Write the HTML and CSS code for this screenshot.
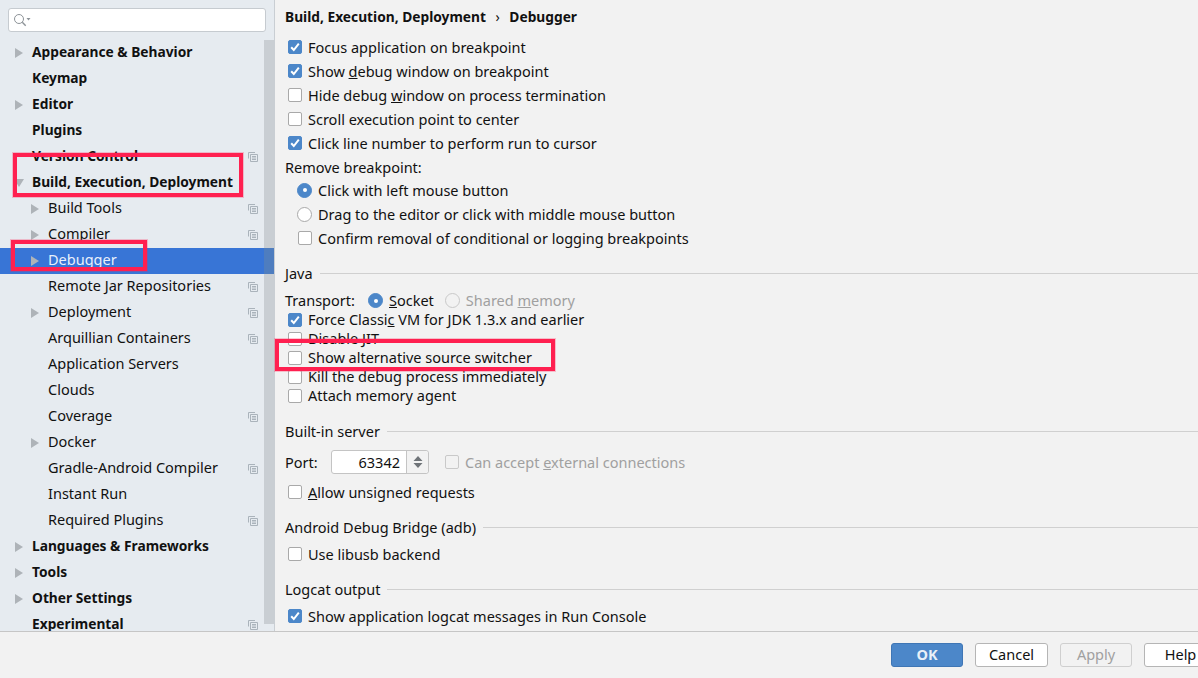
FILE: index.html
```html
<!DOCTYPE html>
<html lang="en">
<head>
<meta charset="utf-8">
<title>Settings - Debugger</title>
<link rel="stylesheet" href="styles.css">
</head>
<body>
<svg class="defs" width="0" height="0" aria-hidden="true">
  <symbol id="copy" viewBox="0 0 10 10"><path d="M.5 6.5V.5h6.5M2.5 9.5V2.5h7v7zM4 4.5h4M4 6h4M4 7.5h4" fill="none" stroke="#aab3bb"/></symbol>
  <symbol id="right" viewBox="0 0 8 10"><path d="M0 0l8 5-8 5z" fill="#aeb3b8"/></symbol>
  <symbol id="down" viewBox="0 0 10 8"><path d="M0 0h10L5 8z" fill="#aeb3b8"/></symbol>
  <symbol id="tick" viewBox="0 0 14 14"><path d="M3.2 7.2l2.6 2.8 5-6.4" fill="none" stroke="#fff" stroke-width="2"/></symbol>
</svg>
<div class="window">
  <div class="main">
    <aside class="sidebar">
      <div class="search">
        <svg class="search-icon" viewBox="0 0 18 14" width="18" height="14"><circle cx="6" cy="6" r="4.5" fill="none" stroke="#8d9398"/><path d="M9.3 9.3l3.4 3.4" stroke="#8d9398" stroke-width="1.4"/><path d="M13.5 5h4l-2 2.500z" fill="#8d9398"/></svg>
      </div>
      <div class="tree-wrap">
        <div class="scrollbar"></div>
        <ul class="tree">
          <li class="row top"><svg class="arrow"><use href="#right"/></svg><span>Appearance &amp; Behavior</span></li>
          <li class="row top"><span>Keymap</span></li>
          <li class="row top"><svg class="arrow"><use href="#right"/></svg><span>Editor</span></li>
          <li class="row top"><span>Plugins</span></li>
          <li class="row top"><span>Version Control</span><svg class="copy"><use href="#copy"/></svg></li>
          <li class="row top"><svg class="arrow down"><use href="#down"/></svg><span>Build, Execution, Deployment</span></li>
          <li class="row sub"><svg class="arrow"><use href="#right"/></svg><span>Build Tools</span><svg class="copy"><use href="#copy"/></svg></li>
          <li class="row sub"><svg class="arrow"><use href="#right"/></svg><span>Compiler</span><svg class="copy"><use href="#copy"/></svg></li>
          <li class="row sub selected"><svg class="arrow"><use href="#right"/></svg><span>Debugger</span></li>
          <li class="row sub"><span>Remote Jar Repositories</span><svg class="copy"><use href="#copy"/></svg></li>
          <li class="row sub"><svg class="arrow"><use href="#right"/></svg><span>Deployment</span><svg class="copy"><use href="#copy"/></svg></li>
          <li class="row sub"><span>Arquillian Containers</span><svg class="copy"><use href="#copy"/></svg></li>
          <li class="row sub"><span>Application Servers</span></li>
          <li class="row sub"><span>Clouds</span></li>
          <li class="row sub"><span>Coverage</span><svg class="copy"><use href="#copy"/></svg></li>
          <li class="row sub"><svg class="arrow"><use href="#right"/></svg><span>Docker</span></li>
          <li class="row sub"><span>Gradle-Android Compiler</span><svg class="copy"><use href="#copy"/></svg></li>
          <li class="row sub"><span>Instant Run</span></li>
          <li class="row sub"><span>Required Plugins</span><svg class="copy"><use href="#copy"/></svg></li>
          <li class="row top"><svg class="arrow"><use href="#right"/></svg><span>Languages &amp; Frameworks</span></li>
          <li class="row top"><svg class="arrow"><use href="#right"/></svg><span>Tools</span></li>
          <li class="row top"><svg class="arrow"><use href="#right"/></svg><span>Other Settings</span></li>
          <li class="row top"><span>Experimental</span><svg class="copy"><use href="#copy"/></svg></li>
        </ul>
      </div>
    </aside>
    <section class="content">
      <h1 class="crumb">Build, Execution, Deployment <span class="sep">›</span> Debugger</h1>

      <div class="group-top">
        <div class="opt r24"><i class="cb on"><svg><use href="#tick"/></svg></i>Focus application on breakpoint</div>
        <div class="opt r24"><i class="cb on"><svg><use href="#tick"/></svg></i><span>Show <u>d</u>ebug window on breakpoint</span></div>
        <div class="opt r24"><i class="cb"></i><span>Hide debug <u>w</u>indow on process termination</span></div>
        <div class="opt r24"><i class="cb"></i>Scroll execution point to center</div>
        <div class="opt r24"><i class="cb on"><svg><use href="#tick"/></svg></i>Click line number to perform run to cursor</div>
      </div>
      <div class="label remove">Remove breakpoint:</div>
      <div class="indent">
        <div class="opt r24"><i class="rb on"></i>Click with left mouse button</div>
        <div class="opt r24"><i class="rb"></i>Drag to the editor or click with middle mouse button</div>
        <div class="opt r24"><i class="cb"></i>Confirm removal of conditional or logging breakpoints</div>
      </div>

      <div class="title java">Java</div>
      <div class="transport">
        <span class="transport-label">Transport:</span>
        <i class="rb on"></i><span class="socket"><u>S</u>ocket</span>
        <i class="rb off"></i><span class="muted">Shared <u>m</u>emory</span>
      </div>
      <div class="tight">
        <div class="opt r19"><i class="cb on"><svg><use href="#tick"/></svg></i><span>Force Classi<u>c</u> VM for JDK 1.3.x and earlier</span></div>
        <div class="opt r19"><i class="cb"></i>Disable JIT</div>
        <div class="opt r19"><i class="cb"></i>Show alternative source switcher</div>
        <div class="opt r19"><i class="cb"></i>Kill the debug process immediately</div>
        <div class="opt r19"><i class="cb"></i>Attach memory agent</div>
      </div>

      <div class="title builtin">Built-in server</div>
      <div class="port-row">
        <span class="port-label">Port:</span>
        <div class="spinner">
          <span class="port-value">63342</span>
          <span class="spin"><svg viewBox="0 0 10 14" width="10" height="14"><path d="M5 1l4.500 5h-9zM5 13L.5 8h9z" fill="#6f7478"/></svg></span>
        </div>
        <i class="cb off"></i><span class="muted">Can accept <u>e</u>xternal connections</span>
      </div>
      <div class="opt r24 allow"><i class="cb"></i><span><u>A</u>llow unsigned requests</span></div>

      <div class="title adb">Android Debug Bridge (adb)</div>
      <div class="opt r24 libusb"><i class="cb"></i>Use libusb backend</div>

      <div class="title logcat">Logcat output</div>
      <div class="opt r24 show-log"><i class="cb on"><svg><use href="#tick"/></svg></i>Show application logcat messages in Run Console</div>
    </section>
  </div>
  <footer class="footer">
    <button class="btn primary" type="button">OK</button>
    <button class="btn" type="button">Cancel</button>
    <button class="btn disabled" type="button">Apply</button>
    <button class="btn" type="button">Help</button>
  </footer>
  <div class="mark mark-build"></div>
  <div class="mark mark-debugger"></div>
  <div class="mark mark-switcher"></div>
</div>
</body>
</html>
```
FILE: styles.css
```css
* { box-sizing: border-box; }
html, body { margin: 0; height: 100%; overflow: hidden; }
body { font: 14.5px/19px "Noto Sans", "Open Sans", sans-serif; color: #111; background: #f2f2f2; }
.defs { position: absolute; }
.window { position: relative; width: 1198px; height: 678px; display: flex; flex-direction: column; overflow: hidden; }
.main { height: 631px; display: flex; flex: none; }

.sidebar { width: 275px; flex: none; background: #e6ebf0; border-right: 1px solid #c9ced3; display: flex; flex-direction: column; overflow: hidden; }
.search { margin: 8px 8px 0; width: 258px; height: 24px; background: #fff; border: 1px solid #c6cbd0; border-radius: 3px; display: flex; align-items: center; padding-left: 4px; flex: none; }
.tree-wrap { position: relative; flex: 1; margin-top: 8px; overflow: hidden; }
.scrollbar { position: absolute; right: 0; top: 0; width: 10px; height: 584px; background: #c9ced3; }
.tree { list-style: none; margin: 0; padding: 0; position: relative; }
.row { height: 26px; display: flex; align-items: center; position: relative; padding-bottom: 4px; white-space: nowrap; }
.top { padding-left: 32px; font-weight: 700; font-size: 13.75px; }
.sub { padding-left: 48px; }
.selected { background: #3875d6; color: #e8f0fb; }
.selected::after { content: ""; position: absolute; right: 0; top: 0; width: 10px; height: 100%; background: #4e7dbf; }
.arrow { position: absolute; width: 8px; height: 10px; top: 8px; }
.top .arrow { left: 15px; }
.sub .arrow { left: 31px; }
.arrow.down { width: 10px; height: 8px; left: 14px; top: 9px; }
.copy { position: absolute; left: 248px; top: 8px; width: 10px; height: 10px; }

.content { flex: 1; min-width: 0; padding-left: 10px; overflow: hidden; }
.crumb { margin: 0; height: 35px; font-size: 13.75px; line-height: 19px; font-weight: 700; padding-top: 7px; white-space: nowrap; }
.sep { font-weight: 400; margin: 0 6px; }
.group-top { padding-left: 3px; }
.opt { display: flex; align-items: center; white-space: nowrap; }
.r24 { height: 24px; }
.r19 { height: 19px; }
.cb { flex: none; width: 14px; height: 14px; margin-right: 6px; background: #fff; border: 1px solid #a9a9a9; border-radius: 2px; display: block; }
.cb svg { display: block; width: 14px; height: 14px; margin: -1px; }
.cb.on { background: #4c87c9; border-color: #4c87c9; }
.cb.off { background: transparent; border-color: #c9c9c9; }
.rb { flex: none; width: 15px; height: 15px; margin-left: -1px; margin-right: 6px; background: #fff; border: 1px solid #a9a9a9; border-radius: 50%; display: block; position: relative; }
.rb.on { background: #4c87c9; border-color: #4c87c9; }
.rb.on::after { content: ""; position: absolute; left: 4.5px; top: 4.5px; width: 4px; height: 4px; background: #fff; border-radius: 50%; }
.rb.off { background: transparent; border-color: #c9c9c9; }
.label { height: 23px; line-height: 24px; }
.indent { padding-left: 13px; }
.muted { color: #a0a0a0; white-space: nowrap; }

.title { display: flex; align-items: center; height: 19px; white-space: nowrap; }
.title::after { content: ""; flex: 1; height: 1px; background: #d0d0d0; margin-left: 7px; }
.java { margin-top: 14px; }
.transport { display: flex; align-items: center; height: 19px; margin-top: 8px; white-space: nowrap; }
.transport-label { width: 84px; }
.socket { margin-right: 12px; }
.tight { padding-left: 3px; }
.builtin { margin-top: 17px; }
.port-row { display: flex; align-items: center; height: 24px; margin-top: 9px; white-space: nowrap; }
.port-label { width: 46px; }
.spinner { width: 98px; height: 24px; background: #fff; border: 1px solid #c4c4c4; border-radius: 3px; display: flex; margin-right: 16px; }
.port-value { flex: 1; text-align: right; padding-right: 6px; line-height: 22px; }
.spin { width: 22px; border-left: 1px solid #c4c4c4; background: #f2f2f2; display: flex; align-items: center; justify-content: center; border-radius: 0 3px 3px 0; }
.allow { padding-left: 3px; margin-top: 6px; }
.adb { margin-top: 14px; }
.libusb { padding-left: 3px; margin-top: 5px; }
.logcat { margin-top: 14px; }
.show-log { padding-left: 3px; margin-top: 5px; }

.footer { flex: 1; border-top: 1px solid #c6c6c6; display: flex; justify-content: flex-end; gap: 12px; padding-top: 11px; margin-right: -19px; background: #f2f2f2; }
.btn { width: 73px; height: 24px; padding: 0 0 2px; font: inherit; background: #fff; color: #111; border: 1px solid #b5b5b5; border-radius: 3px; }
.primary { background: #4c87c9; border-color: #3f76b5; color: #e9f0f8; font-weight: 700; width: 72px; }
.disabled { background: #f2f2f2; border-color: #cfcfcf; color: #a0a0a0; width: 72px; }

.mark { position: absolute; border: 4px solid #ff2050; box-shadow: 0 0 0 1px rgba(255,32,80,.25); pointer-events: none; }
.mark-build { left: 13px; top: 153px; width: 230px; height: 44px; }
.mark-debugger { left: 11px; top: 240px; width: 136px; height: 31px; }
.mark-switcher { left: 275px; top: 339px; width: 280px; height: 32px; }
```
